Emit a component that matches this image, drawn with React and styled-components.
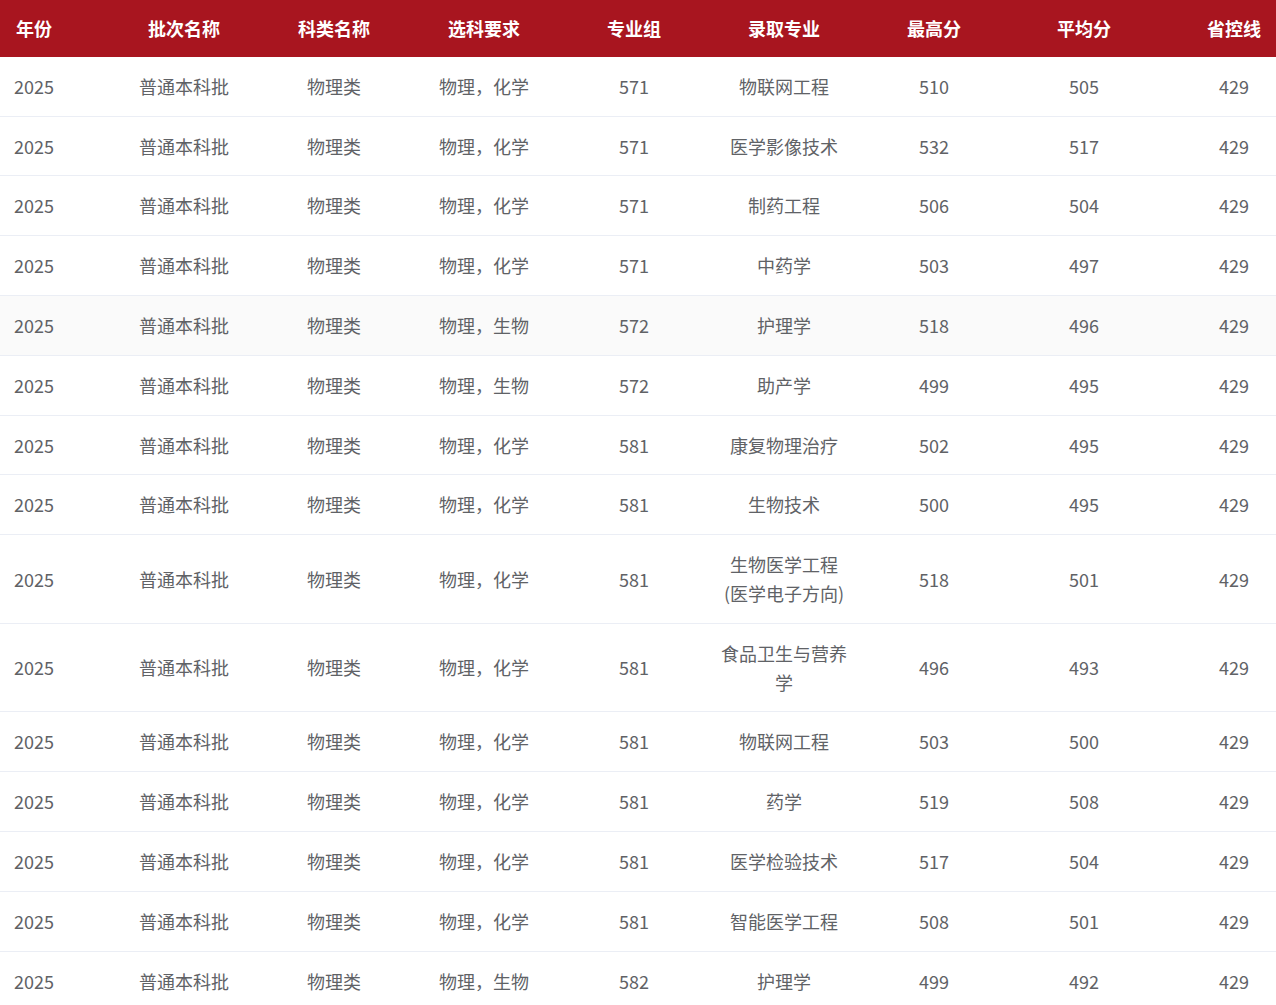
import React from "react";
import styled, { createGlobalStyle } from "styled-components";

const Global = createGlobalStyle`
  html, body { margin: 0; padding: 0; background: #fff; }
  body { font-family: "Noto Sans CJK SC", "Noto Sans", sans-serif; }
  *, *::before, *::after { box-sizing: border-box; }
`;

const Wrap = styled.div`
  width: 1276px;
  overflow: hidden;
`;

const Table = styled.table`
  width: 1350px;
  margin-left: -41px;
  border-collapse: collapse;
  table-layout: fixed;
  font-size: 18px;
  line-height: 1.6;
`;

const Th = styled.th`
  width: 150px;
  background: #a8151f;
  color: #fff;
  font-weight: 700;
  padding: 14px 11px;
  text-align: center;
`;

const Tr = styled.tr`
  background: ${(p) => (p.$hover ? "#fafafa" : "#fff")};
  border-bottom: 1px solid #ebeef5;
`;

const Td = styled.td`
  color: #606266;
  padding: 15px 11px;
  text-align: center;
  vertical-align: middle;
`;

const headers = ["年份", "批次名称", "科类名称", "选科要求", "专业组", "录取专业", "最高分", "平均分", "省控线"];

const rows = [
  ["物理，化学", "571", "物联网工程", "510", "505"],
  ["物理，化学", "571", "医学影像技术", "532", "517"],
  ["物理，化学", "571", "制药工程", "506", "504"],
  ["物理，化学", "571", "中药学", "503", "497"],
  ["物理，生物", "572", "护理学", "518", "496", true],
  ["物理，生物", "572", "助产学", "499", "495"],
  ["物理，化学", "581", "康复物理治疗", "502", "495"],
  ["物理，化学", "581", "生物技术", "500", "495"],
  ["物理，化学", "581", "生物医学工程(医学电子方向)", "518", "501"],
  ["物理，化学", "581", "食品卫生与营养学", "496", "493"],
  ["物理，化学", "581", "物联网工程", "503", "500"],
  ["物理，化学", "581", "药学", "519", "508"],
  ["物理，化学", "581", "医学检验技术", "517", "504"],
  ["物理，化学", "581", "智能医学工程", "508", "501"],
  ["物理，生物", "582", "护理学", "499", "492"],
];

export default function App() {
  return (
    <Wrap>
      <Global />
      <Table>
        <thead>
          <tr>
            {headers.map((h) => (
              <Th key={h}>{h}</Th>
            ))}
          </tr>
        </thead>
        <tbody>
          {rows.map((r, i) => (
            <Tr key={i} $hover={r[5]}>
              <Td>2025</Td>
              <Td>普通本科批</Td>
              <Td>物理类</Td>
              <Td>{r[0]}</Td>
              <Td>{r[1]}</Td>
              <Td>{r[2]}</Td>
              <Td>{r[3]}</Td>
              <Td>{r[4]}</Td>
              <Td>429</Td>
            </Tr>
          ))}
        </tbody>
      </Table>
    </Wrap>
  );
}
